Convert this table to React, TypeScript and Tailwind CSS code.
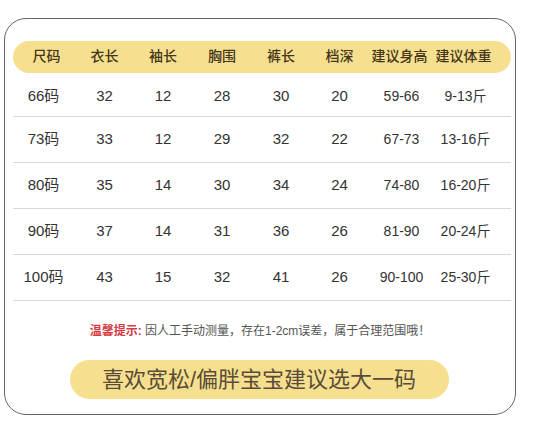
import React from 'react';

const headers = ['尺码', '衣长', '袖长', '胸围', '裤长', '档深', '建议身高', '建议体重'];

const rows = [
  ['66码', '32', '12', '28', '30', '20', '59-66', '9-13斤'],
  ['73码', '33', '12', '29', '32', '22', '67-73', '13-16斤'],
  ['80码', '35', '14', '30', '34', '24', '74-80', '16-20斤'],
  ['90码', '37', '14', '31', '36', '26', '81-90', '20-24斤'],
  ['100码', '43', '15', '32', '41', '26', '90-100', '25-30斤'],
];

const cols = 'grid grid-cols-[58px_58px_59px_59px_59px_58px_62px_66px] pl-[5px]';

const App: React.FC = () => {
  return (
    <div
      className="w-[545px] h-[422px] bg-white pt-[18px] pl-[4px]"
      style={{ fontFamily: '"Liberation Sans", "Noto Sans CJK SC", sans-serif' }}
    >
      <div className="w-[512px] h-[397px] border-[1.5px] border-[#666] rounded-[22px] pl-[7.5px] pr-[4.5px] pt-[21.5px]">
        <div className={`${cols} h-[32px] items-center rounded-full bg-[#f6e08f] text-[14px] font-medium text-[#45361b]`}>
          {headers.map((h) => (
            <div key={h} className="text-center">{h}</div>
          ))}
        </div>

        <div>
          {rows.map((row, i) => (
            <div
              key={row[0]}
              className={`${cols} items-center border-b border-[#d9d9d9] text-[15px] text-[#333] ${i === 0 ? 'h-[44px] pt-[4px]' : 'h-[46px]'}`}
            >
              {row.map((cell, j) => (
                <div key={j} className={`text-center ${j === 0 ? 'pr-[6px]' : ''} ${j >= 6 ? 'text-[14px] pl-[4px]' : ''}`}>
                  {cell}
                </div>
              ))}
            </div>
          ))}
        </div>

        <p className="mt-[21px] pr-[3px] text-center text-[12px] text-[#555] leading-[18px]">
          <span className="text-[#d53a45] font-bold">温馨提示:</span> 因人工手动测量，存在1-2cm误差，属于合理范围哦！
        </p>

        <div className="mt-[20px] ml-[57px] w-[379px] h-[39px] rounded-full bg-[#f6e08f] flex items-center justify-center text-[22px] text-[#5a4c38]">
          喜欢宽松/偏胖宝宝建议选大一码
        </div>
      </div>
    </div>
  );
};

export default App;
